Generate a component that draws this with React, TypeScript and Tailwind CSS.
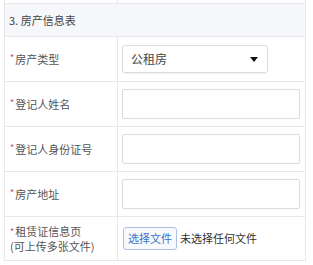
import React from 'react';

const rows = [
  { label: '登记人姓名' },
  { label: '登记人身份证号' },
  { label: '房产地址' },
];

const Label = ({ children }: { children: React.ReactNode }) => (
  <span>
    <span className="text-[#e0464b] text-[9px] align-top mr-[1px]">*</span>
    {children}
  </span>
);

export default function App() {
  return (
    <div className="w-[313px] h-[265px] bg-white overflow-hidden pl-[4px] pr-[7px] text-[11px] text-[#555] font-['Noto_Sans_CJK_SC','Noto_Sans',sans-serif]">
      <div className="border-l border-r border-[#e8e8e8]">
        <div className="flex h-[4px] border-b border-[#e8e8e8]">
          <div className="w-[113px] border-r border-[#e8e8e8]" />
          <div className="flex-1" />
        </div>
        <div className="h-[33px] bg-[#f5f7fa] border-b border-[#e8e8e8] flex items-center pl-[4px] text-[#444]">
          3. 房产信息表
        </div>

        <div className="flex h-[45px] border-b border-[#e8e8e8]">
          <div className="w-[113px] border-r border-[#e8e8e8] flex items-center pl-[5px]">
            <Label>房产类型</Label>
          </div>
          <div className="flex-1 flex items-center pl-[4px]">
            <div className="w-[146px] h-[28px] border border-[#dcdcdc] rounded-[3px] shadow-[0_1px_2px_rgba(0,0,0,0.06)] flex items-center justify-between pl-[8px] pr-[9px] text-[12px] text-[#444]">
              <span>公租房</span>
              <svg width="8" height="5" viewBox="0 0 8 5"><path d="M0 0h8L4 5z" fill="#111" /></svg>
            </div>
          </div>
        </div>

        {rows.map(r => (
          <div key={r.label} className="flex h-[45px] border-b border-[#e8e8e8]">
            <div className="w-[113px] border-r border-[#e8e8e8] flex items-center pl-[5px]">
              <Label>{r.label}</Label>
            </div>
            <div className="flex-1 flex items-center pl-[4px] pr-[5px]">
              <div className="w-full h-[30px] border border-[#dcdcdc] rounded-[2px] bg-white" />
            </div>
          </div>
        ))}

        <div className="flex h-[44px] border-b border-[#e8e8e8]">
          <div className="w-[113px] border-r border-[#e8e8e8] flex flex-col justify-center pl-[5px] leading-[15px]">
            <Label>租赁证信息页</Label>
            <span>(可上传多张文件)</span>
          </div>
          <div className="flex-1 flex items-center pl-[5px] text-[#333]">
            <button className="h-[23px] px-[4px] border border-[#a9c1e6] rounded-[3px] bg-[#f7f9fc] text-[#3b73c8] text-[11px] leading-none">
              选择文件
            </button>
            <span className="ml-[3px]">未选择任何文件</span>
          </div>
        </div>
      </div>
    </div>
  );
}
